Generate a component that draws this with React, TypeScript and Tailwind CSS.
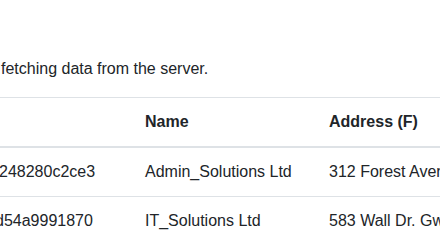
export default function App() {
  const rows = [
    { id: "248280c2ce3", idShift: "-ml-[1px]", name: "Admin_Solutions Ltd", address: "312 Forest Avenue, Springfield" },
    { id: "d54a9991870", idShift: "-ml-[5px]", name: "IT_Solutions Ltd", address: "583 Wall Dr. Gwynn Oak, MD 21207" },
  ];
  return (
    <div
      className="w-[440px] h-[244px] overflow-hidden bg-white text-[#212529] text-[16px] leading-[24px]"
      style={{ fontFamily: '"Liberation Sans", Arial, sans-serif' }}
    >
      <div className="w-[800px] pt-[57px]">
        <p className="pl-[1px] mb-4 whitespace-nowrap">fetching data from the server.</p>
        <div className="border-t border-[#dee2e6]">
          <div className="grid grid-cols-[133px_184px_1fr] border-b-2 border-[#dee2e6] font-bold">
            <div className="py-3 px-3"></div>
            <div className="py-3 px-3 whitespace-nowrap">Name</div>
            <div className="py-3 px-3 whitespace-nowrap">Address (F)</div>
          </div>
          {rows.map((r, i) => (
            <div
              key={r.id}
              className={`grid grid-cols-[133px_184px_1fr] ${i === 0 ? "border-b border-[#dee2e6]" : ""}`}
            >
              <div className="py-3 overflow-hidden whitespace-nowrap">
                <span className={`block ${r.idShift}`}>{r.id}</span>
              </div>
              <div className="py-3 px-3 whitespace-nowrap">{r.name}</div>
              <div className="py-3 px-3 whitespace-nowrap">{r.address}</div>
            </div>
          ))}
        </div>
      </div>
    </div>
  );
}
